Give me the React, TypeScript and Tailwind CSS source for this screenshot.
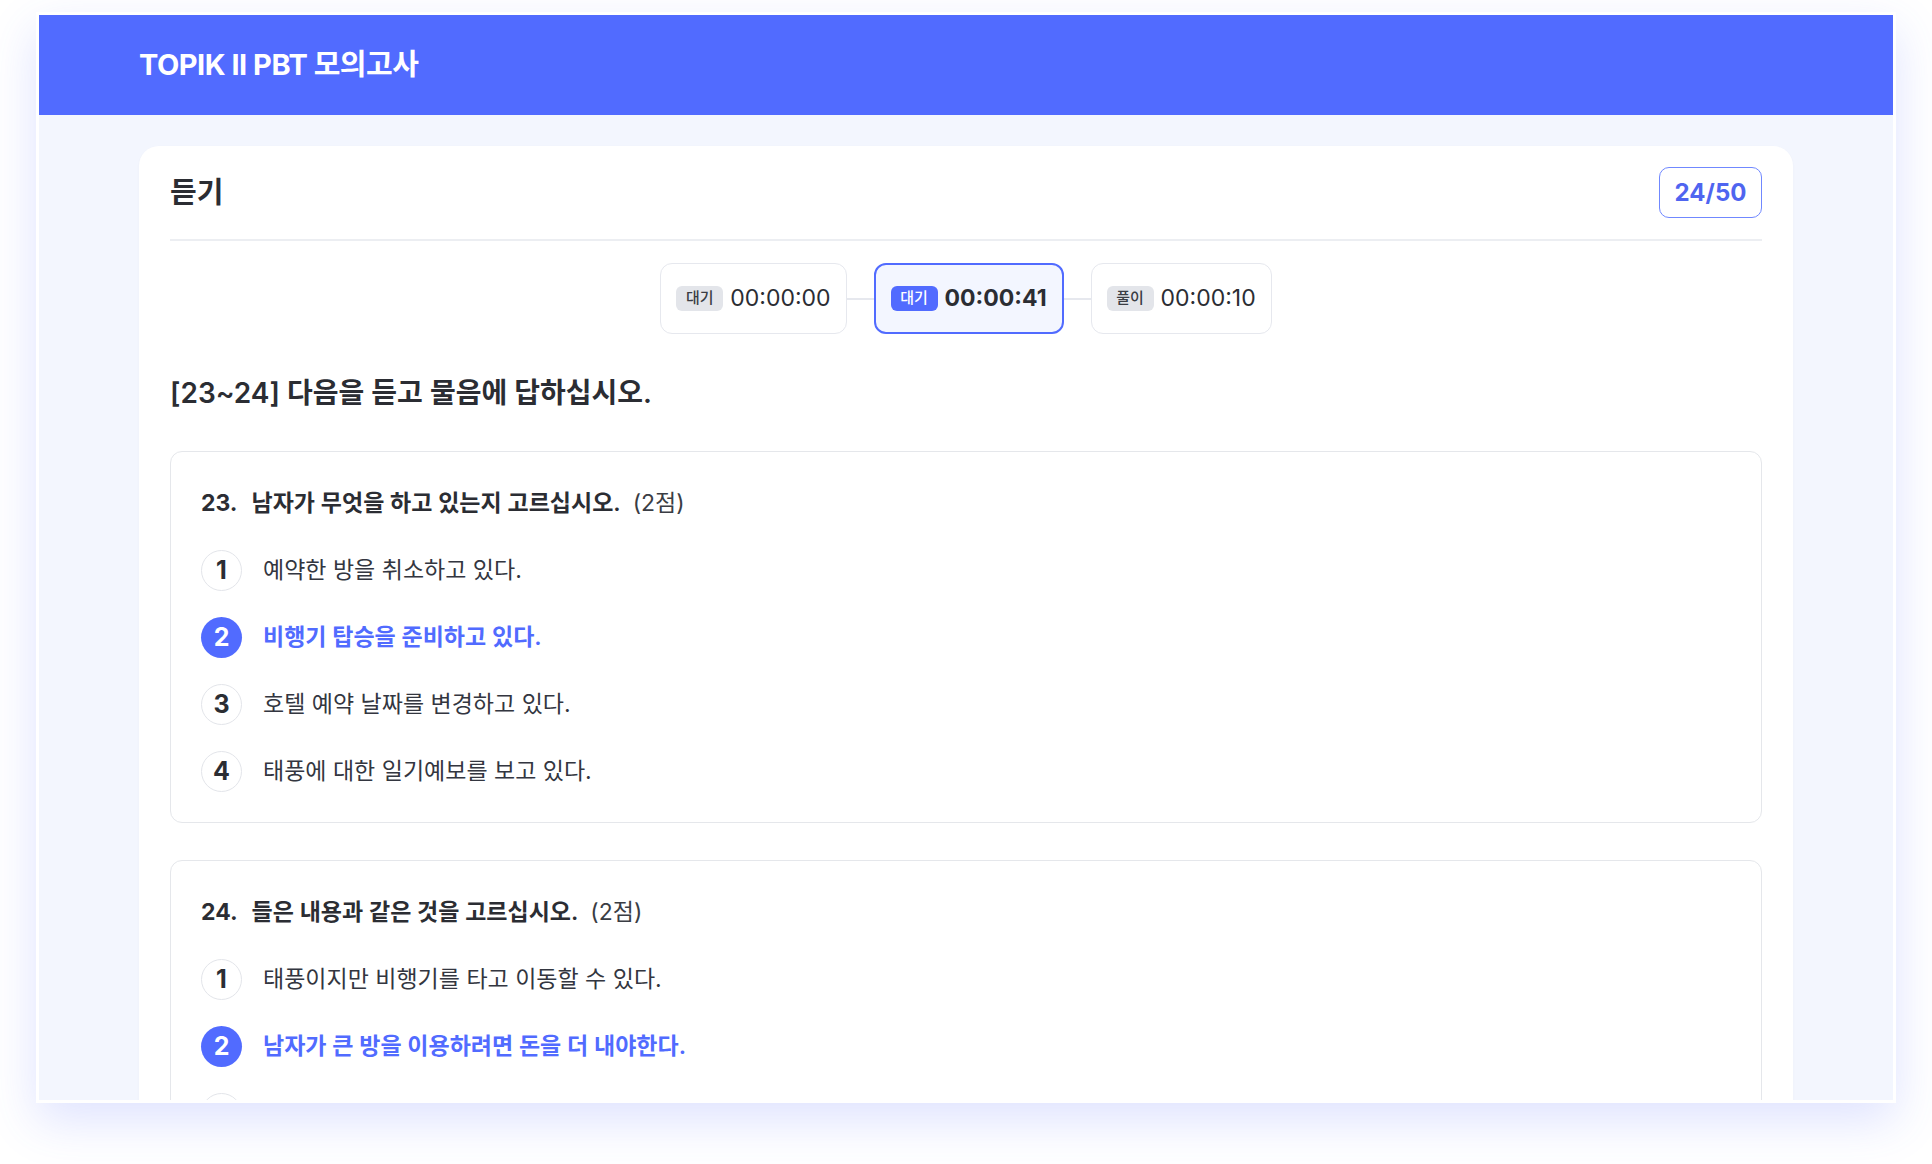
const font = { fontFamily: 'Inter, "Noto Sans CJK KR", sans-serif' };

const timers = [
  { label: "대기", time: "00:00:00", active: false },
  { label: "대기", time: "00:00:41", active: true },
  { label: "풀이", time: "00:00:10", active: false },
];

const questions = [
  {
    no: "23.",
    text: "남자가 무엇을 하고 있는지 고르십시오.",
    score: "(2점)",
    selected: 2,
    options: [
      "예약한 방을 취소하고 있다.",
      "비행기 탑승을 준비하고 있다.",
      "호텔 예약 날짜를 변경하고 있다.",
      "태풍에 대한 일기예보를 보고 있다.",
    ],
  },
  {
    no: "24.",
    text: "들은 내용과 같은 것을 고르십시오.",
    score: "(2점)",
    selected: 2,
    options: [
      "태풍이지만 비행기를 타고 이동할 수 있다.",
      "남자가 큰 방을 이용하려면 돈을 더 내야한다.",
      "여자는 남자에게 호텔 예약을 다시 하라고 했다.",
      "남자는 태풍 때문에 여행을 취소하려고 한다.",
    ],
  },
];

const TimerBox = ({ label, time, active }: { label: string; time: string; active: boolean }) => (
  <div
    className={`flex items-center h-[71px] px-[15px] gap-[7px] rounded-[12px] ${
      active ? "border-2 border-[#516bff] bg-[#f3f6ff]" : "border-[1.5px] border-[#e6e8ee] bg-white"
    }`}
  >
    <span
      className={`w-[47px] h-[25px] rounded-[6px] flex items-center justify-center text-[15px] font-medium ${
        active ? "bg-[#516bff] text-white" : "bg-[#e3e5ea] text-[#3a3d44]"
      }`}
    >
      {label}
    </span>
    <span className={`text-[23px] text-[#2b2d33] ${active ? "font-bold" : "font-normal"}`}>{time}</span>
  </div>
);

const QuestionCard = ({ q }: { q: (typeof questions)[number] }) => (
  <div className="border-[1.5px] border-[#e5e7eb] rounded-[12px] px-[30px] pt-[29px] pb-[30px]">
    {/* question title */}
    <div className="text-[23px] leading-[44px] text-[#2b2d33]">
      <span className="font-bold">{q.no}</span>
      <span className="font-semibold ml-[14px]">{q.text}</span>
      <span className="font-normal ml-[12px] text-[#3a3d44]">{q.score}</span>
    </div>
    <div className="mt-[25px] flex flex-col gap-[26px]">
      {q.options.map((opt, i) => {
        const on = q.selected === i + 1;
        return (
          <div key={i} className="flex items-center h-[41px]">
            <span
              className={`w-[41px] h-[41px] shrink-0 rounded-full flex items-center justify-center text-[25px] font-bold ${
                on ? "bg-[#516bff] text-white" : "border-[1.5px] border-[#e3e5ea] text-[#2b2d33]"
              }`}
            >
              {i + 1}
            </span>
            <span
              className={`ml-[21px] text-[23px] ${
                on ? "text-[#516bff] font-semibold" : "text-[#333640] font-normal"
              }`}
            >
              {opt}
            </span>
          </div>
        );
      })}
    </div>
  </div>
);

export default function App() {
  return (
    <div className="w-[1932px] h-[1164px] bg-white overflow-hidden" style={font}>
      <div className="ml-[36px] mt-[12px] w-[1860px] h-[1091px] p-[3px] bg-white shadow-[0_18px_45px_rgba(79,100,255,0.18)]">
        <div className="flex flex-col h-full">
          {/* Top bar */}
          <header className="h-[100px] shrink-0 bg-[#516bff] px-[100px] flex items-center">
            <h1 className="text-white text-[29px] font-bold tracking-[-0.5px]">TOPIK II PBT 모의고사</h1>
          </header>

          {/* Body */}
          <main className="flex-1 overflow-hidden bg-[#f3f6fe] px-[100px] pt-[31px]">
            <section className="bg-white rounded-[20px] px-[31px] pt-[21px] min-h-[1200px] shadow-[0_1px_3px_rgba(0,0,0,0.03)]">
              <div className="flex justify-between items-center pb-[21px] border-b-2 border-[#eceef2]">
                <h2 className="text-[29px] font-semibold text-[#2b2d33]">듣기</h2>
                <div className="w-[103px] h-[51px] rounded-[10px] border-[1.5px] border-[#7088ff] flex items-center justify-center text-[24px] font-bold text-[#4f65f0]">
                  24/50
                </div>
              </div>

              {/* Timers */}
              <div className="mt-[22px] flex justify-center items-center">
                {timers.map((t, i) => (
                  <div key={i} className="flex items-center">
                    {i > 0 && <span className="w-[27px] h-[2px] bg-[#e6e8ee]" />}
                    <TimerBox {...t} />
                  </div>
                ))}
              </div>

              <p className="mt-[39px] text-[28px] leading-[40px] font-semibold text-[#2b2d33]">
                [23~24] 다음을 듣고 물음에 답하십시오.
              </p>

              <div className="mt-[38px] flex flex-col gap-[37px]">
                {questions.map((q) => (
                  <QuestionCard key={q.no} q={q} />
                ))}
              </div>
            </section>
          </main>
        </div>
      </div>
    </div>
  );
}
